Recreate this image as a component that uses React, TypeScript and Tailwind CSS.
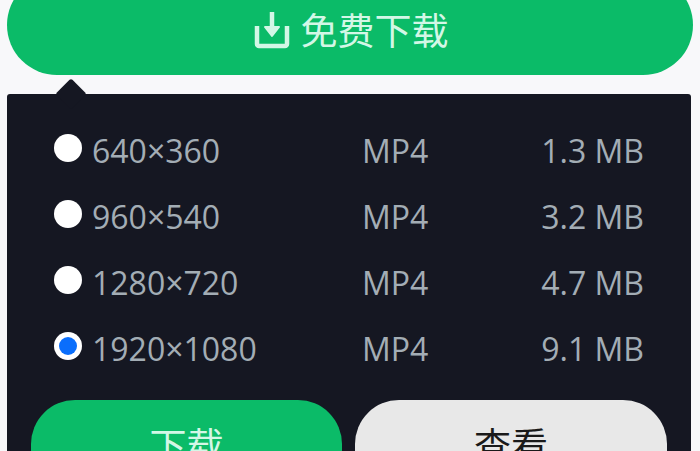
const formats = [
  { res: "640×360", type: "MP4", size: "1.3 MB", checked: false },
  { res: "960×540", type: "MP4", size: "3.2 MB", checked: false },
  { res: "1280×720", type: "MP4", size: "4.7 MB", checked: false },
  { res: "1920×1080", type: "MP4", size: "9.1 MB", checked: true },
];

const font = "font-['Open_Sans','Noto_Sans_CJK_SC',sans-serif]";

function DownloadIcon() {
  return (
    <svg width="36" height="38" viewBox="0 0 36 38" fill="none" stroke="#d3f7e6" strokeWidth="4.5" strokeLinejoin="round">
      <path d="M3 15v18a2 2 0 0 0 2 2h26a2 2 0 0 0 2-2V15" />
      <path d="M18 1v16" />
      <path d="M11 16h14l-7 9z" fill="#d3f7e6" strokeWidth="2" />
    </svg>
  );
}

function Radio({ checked }: { checked: boolean }) {
  return (
    <span className="flex h-[28px] w-[28px] items-center justify-center rounded-full bg-white">
      {checked && <span className="h-[18px] w-[18px] rounded-full bg-[#0a6efc]" />}
    </span>
  );
}

export default function App() {
  return (
    <div className={`h-[451px] w-[700px] overflow-hidden bg-[#f8f8fa] ${font}`}>
      <div className="-mt-[25px] ml-[7px] flex h-[100px] w-[686px] items-center justify-center gap-[11px] rounded-[50px] bg-[#0bbb68] pl-[2px] pt-[10px] text-[#d3f7e6]">
        <DownloadIcon />
        <span className="text-[37px] leading-none">免费下载</span>
      </div>

      <div className="relative ml-[7px] mt-[19px] h-[400px] w-[684px] rounded-[3px] bg-[#151722] pl-[47px] pr-[47px] pt-[24px]">
        <span className="absolute left-[53px] -top-[11px] h-[22px] w-[22px] rotate-45 rounded-[2px] bg-[#151722]" />
        {formats.map((f) => (
          <div key={f.res} className="grid h-[66px] grid-cols-[308px_1fr_auto] items-center text-[32px] leading-none text-[#a3adb5]">
            <div className="flex items-center gap-[10px]">
              <span className="-mt-[6px]">
                <Radio checked={f.checked} />
              </span>
              <span>{f.res}</span>
            </div>
            <span>{f.type}</span>
            <span>{f.size}</span>
          </div>
        ))}
        <div className="-ml-[23px] mt-[18px] flex w-[636px] gap-[13px]">
          <button className="flex h-[100px] w-[311px] shrink-0 justify-center rounded-[44px] bg-[#0bbb68] pt-[27px] text-[37px] leading-none text-[#d3f7e6]">下载</button>
          <button className="flex h-[100px] w-[312px] shrink-0 justify-center rounded-[44px] bg-[#e8e8e8] pt-[27px] text-[37px] leading-none text-[#1a1a1a]">查看</button>
        </div>
      </div>
    </div>
  );
}
